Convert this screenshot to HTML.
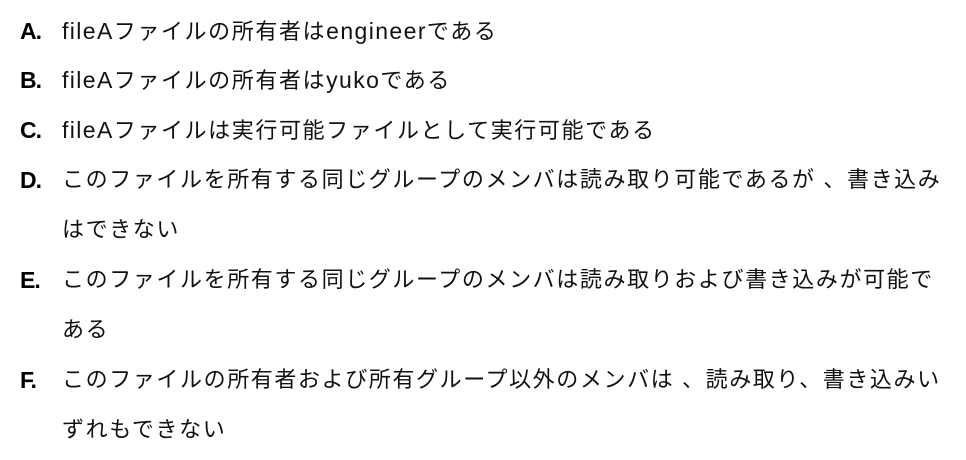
<!DOCTYPE html>
<html><head><meta charset="utf-8"><style>
body{margin:0;width:966px;height:460px;background:#fff;overflow:hidden;font-family:"Liberation Sans","Noto Sans CJK JP",sans-serif;color:#111;}
.l{position:absolute;left:62px;height:50px;line-height:50px;font-size:22px;white-space:nowrap;letter-spacing:1.6px;}
.e{font-size:23px;letter-spacing:1.4px;}
.k{position:absolute;left:20px;height:50px;line-height:50px;font-size:23px;font-weight:bold;color:#000;letter-spacing:-1px;}
</style></head><body>
<div class="k" style="top:6px">A.</div><div class="l" style="top:6px"><span class="e">fileA</span>ファイルの所有者は<span class="e">engineer</span>である</div>
<div class="k" style="top:55px">B.</div><div class="l" style="top:55px"><span class="e">fileA</span>ファイルの所有者は<span class="e">yuko</span>である</div>
<div class="k" style="top:105px">C.</div><div class="l" style="top:105px"><span class="e">fileA</span>ファイルは実行可能ファイルとして実行可能である</div>
<div class="k" style="top:155px">D.</div><div class="l" style="top:155px">このファイルを所有する同じグループのメンバは読み取り可能であるが 、書き込み</div>
<div class="l" style="top:205px">はできない</div>
<div class="k" style="top:255px">E.</div><div class="l" style="top:255px">このファイルを所有する同じグループのメンバは読み取りおよび書き込みが可能で</div>
<div class="l" style="top:305px">ある</div>
<div class="k" style="top:355px">F.</div><div class="l" style="top:355px">このファイルの所有者および所有グループ以外のメンバは 、読み取り、書き込みい</div>
<div class="l" style="top:405px">ずれもできない</div>
</body></html>
